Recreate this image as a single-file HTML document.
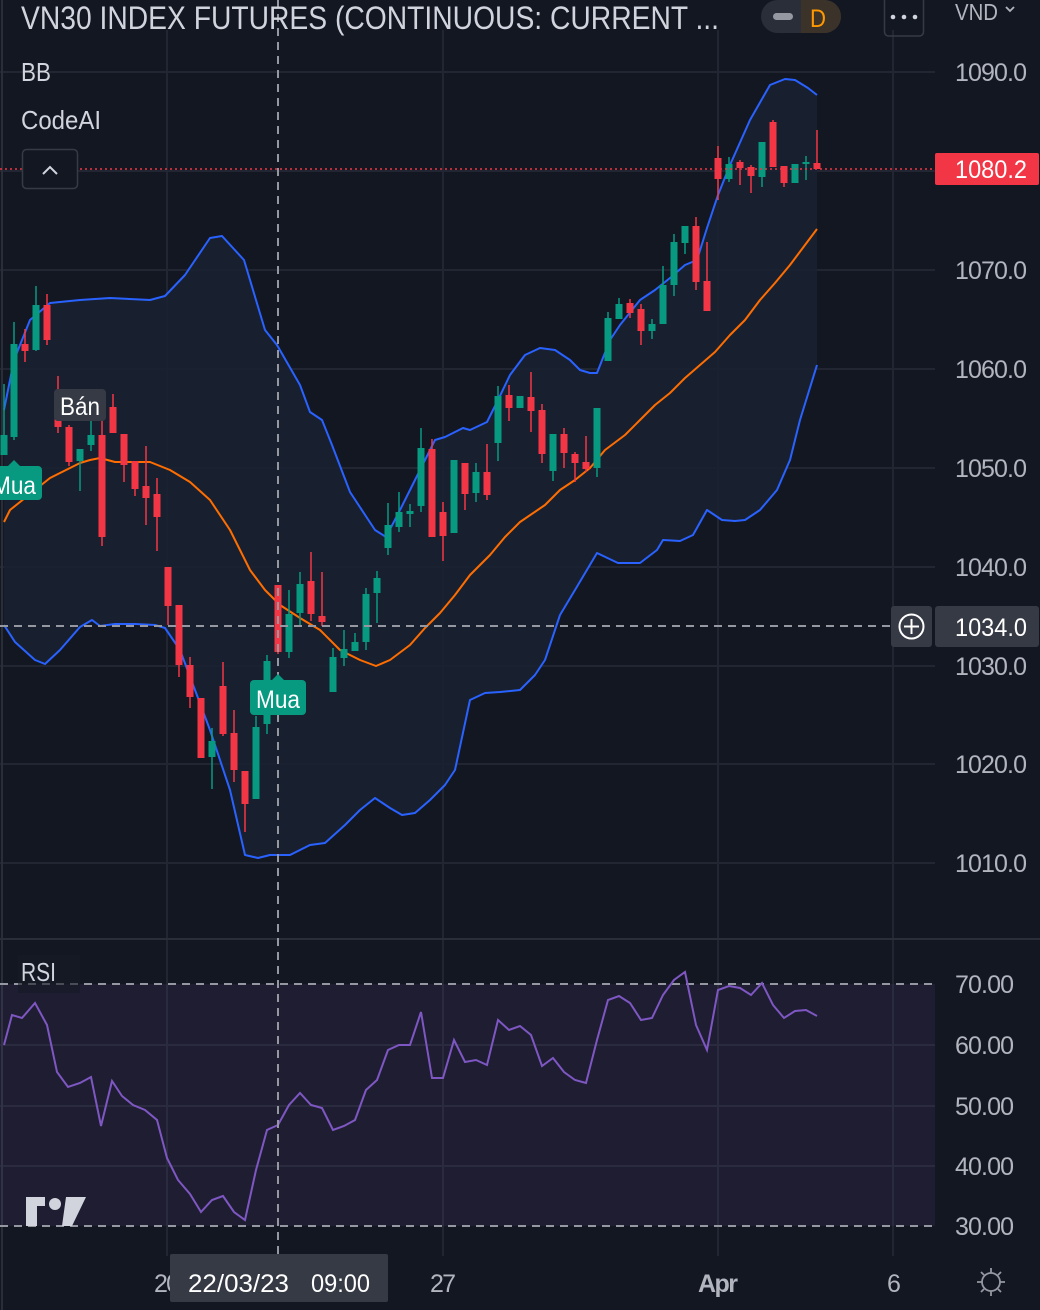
<!DOCTYPE html>
<html><head><meta charset="utf-8"><style>
html,body{margin:0;padding:0;background:#131722;}
svg{display:block;font-family:"Liberation Sans",sans-serif;}
</style></head><body>
<svg width="1040" height="1310" viewBox="0 0 1040 1310" xmlns="http://www.w3.org/2000/svg">
<rect width="1040" height="1310" fill="#131722"/>
<!-- grid -->
<g stroke="#222632" stroke-width="2">
<path d="M0 72H935M0 171H935M0 270H935M0 369H935M0 468H935M0 567H935M0 666H935M0 764H935M0 863H935"/>
<path d="M167 30V938M443 30V938M718 30V938M893 30V938"/>
<path d="M0 1045H935M0 1106H935M0 1166H935"/>
<path d="M167 940V1256M443 940V1256M718 940V1256M893 940V1256"/>
</g>
<path d="M0 939H1040" stroke="#2a2e39" stroke-width="2"/>
<path d="M2 0V1310" stroke="#2a2e39" stroke-width="2"/>
<!-- BB fill -->
<polygon fill="#1a2131" fill-opacity="0.9" points="4,410 14,360 30,320 50,303 80,300 110,298 150,300 165,296 185,275 210,238 222,236 244,260 265,330 277,345 300,385 310,412 322,420 332,445 350,492 375,530 386,537 400,510 410,490 420,470 435,440 445,437 455,432 463,428 470,430 487,422 498,400 510,375 525,355 540,348 555,350 570,360 580,370 590,373 597,373 610,340 620,325 640,300 655,290 670,278 685,265 697,260 707,228 718,195 730,165 750,120 770,85 785,79 795,80 808,88 817,95 817,365 800,420 790,460 777,490 760,510 745,520 735,521 722,520 707,510 693,535 680,541 663,540 657,550 640,563 618,563 597,553 575,590 560,615 545,660 535,675 520,690 500,692 485,693 470,700 455,770 445,785 430,800 415,813 402,815 390,808 375,798 360,810 345,825 325,843 310,845 290,855 270,855 258,858 245,855 230,790 210,730 195,690 180,650 165,628 155,625 135,624 115,624 100,626 92,620 80,627 60,650 45,664 35,660 25,651 15,642 4,625"/>
<g fill="none" stroke-width="2" stroke-linejoin="round">
<polyline stroke="#2962ff" points="4,410 14,360 30,320 50,303 80,300 110,298 150,300 165,296 185,275 210,238 222,236 244,260 265,330 277,345 300,385 310,412 322,420 332,445 350,492 375,530 386,537 400,510 410,490 420,470 435,440 445,437 455,432 463,428 470,430 487,422 498,400 510,375 525,355 540,348 555,350 570,360 580,370 590,373 597,373 610,340 620,325 640,300 655,290 670,278 685,265 697,260 707,228 718,195 730,165 750,120 770,85 785,79 795,80 808,88 817,95"/>
<polyline stroke="#2962ff" points="4,625 15,642 25,651 35,660 45,664 60,650 80,627 92,620 100,626 115,624 135,624 155,625 165,628 180,650 195,690 210,730 230,790 245,855 258,858 270,855 290,855 310,845 325,843 345,825 360,810 375,798 390,808 402,815 415,813 430,800 445,785 455,770 470,700 485,693 500,692 520,690 535,675 545,660 560,615 575,590 597,553 618,563 640,563 657,550 663,540 680,541 693,535 707,510 722,520 735,521 745,520 760,510 777,490 790,460 800,420 817,365"/>
<polyline stroke="#ff6d00" points="4,522 10,510 35,490 50,478 80,463 90,460 100,458 115,462 150,462 170,470 190,482 210,500 230,530 250,570 265,590 280,605 300,618 320,630 340,650 360,660 376,666 390,660 410,645 425,628 440,613 455,595 470,575 490,555 505,537 520,522 545,505 560,490 575,480 590,468 605,450 625,435 640,420 655,405 670,393 685,378 700,365 715,352 730,335 745,320 760,300 775,283 790,265 805,245 817,229"/>
</g>
<!-- red candles -->
<g fill="#f23645">
<path stroke="#f23645" stroke-width="1.5" d="M25 329V362M47 294V345M58 376V433M69 425V466M102 403V546M113 394V433M124 434V482M135 461V496M146 446V525M157 478V551M168 567V625M179 605V677M190 657V708M201 698V758M223 662V736M234 710V782M245 771V832M278 585V654M311 552V621M322 572V626M432 439V537M443 502V561M465 463V510M487 444V500M509 385V421M531 372V432M542 404V463M564 428V468M575 452V482M586 436V472M630 299V318M641 304V345M696 217V290M707 242V311M718 146V200M740 160V185M751 165V193M773 120V167M784 166V187M817 130V169"/>
<rect x="21.5" y="344" width="7" height="7"/><rect x="43.5" y="305" width="7" height="35"/><rect x="54.5" y="394" width="7" height="33"/><rect x="65.5" y="427" width="7" height="35"/><rect x="98.5" y="435" width="7" height="102"/><rect x="109.5" y="407" width="7" height="26"/><rect x="120.5" y="434" width="7" height="31"/><rect x="131.5" y="461" width="7" height="28"/><rect x="142.5" y="486" width="7" height="12"/><rect x="153.5" y="494" width="7" height="23"/><rect x="164.5" y="567" width="7" height="39"/><rect x="175.5" y="605" width="7" height="60"/><rect x="186.5" y="665" width="7" height="32"/><rect x="197.5" y="698" width="7" height="60"/><rect x="219.5" y="686" width="7" height="48"/><rect x="230.5" y="733" width="7" height="37"/><rect x="241.5" y="771" width="7" height="33"/><rect x="274.5" y="585" width="7" height="67"/><rect x="307.5" y="581" width="7" height="33"/><rect x="318.5" y="616" width="7" height="6"/><rect x="428.5" y="449" width="7" height="88"/><rect x="439.5" y="512" width="7" height="24"/><rect x="461.5" y="463" width="7" height="31"/><rect x="483.5" y="472" width="7" height="23"/><rect x="505.5" y="395" width="7" height="13"/><rect x="527.5" y="397" width="7" height="14"/><rect x="538.5" y="410" width="7" height="44"/><rect x="560.5" y="434" width="7" height="19"/><rect x="571.5" y="454" width="7" height="9"/><rect x="582.5" y="462" width="7" height="7"/><rect x="626.5" y="303" width="7" height="10"/><rect x="637.5" y="309" width="7" height="22"/><rect x="692.5" y="226" width="7" height="56"/><rect x="703.5" y="281" width="7" height="30"/><rect x="714.5" y="158" width="7" height="21"/><rect x="736.5" y="162" width="7" height="6"/><rect x="747.5" y="167" width="7" height="9"/><rect x="769.5" y="122" width="7" height="45"/><rect x="780.5" y="166" width="7" height="17"/><rect x="813.5" y="163" width="7" height="6"/>
</g>
<!-- green candles -->
<g fill="#089981">
<path stroke="#089981" stroke-width="1.5" d="M4 384V455M14 322V440M36 286V351M80 449V491M91 396V451M212 728V789M256 716V799M267 655V734M289 590V658M300 572V626M333 648V692M344 630V666M355 633V651M366 588V650M377 571V623M388 503V555M399 492V532M410 504V527M421 428V512M454 460V533M476 463V502M498 386V461M520 396V408M553 434V481M597 408V477M608 312V361M619 298V319M652 319V339M663 266V324M674 234V296M685 226V254M729 157V182M762 142V187M795 164V183M806 156V180"/>
<rect x="0.5" y="435" width="7" height="20"/><rect x="10.5" y="344" width="7" height="93"/><rect x="32.5" y="305" width="7" height="45"/><rect x="76.5" y="449" width="7" height="12"/><rect x="87.5" y="435" width="7" height="10"/><rect x="208.5" y="741" width="7" height="16"/><rect x="252.5" y="727" width="7" height="72"/><rect x="263.5" y="661" width="7" height="63"/><rect x="285.5" y="614" width="7" height="38"/><rect x="296.5" y="584" width="7" height="29"/><rect x="329.5" y="657" width="7" height="35"/><rect x="340.5" y="649" width="7" height="9"/><rect x="351.5" y="642" width="7" height="9"/><rect x="362.5" y="594" width="7" height="48"/><rect x="373.5" y="578" width="7" height="15"/><rect x="384.5" y="525" width="7" height="23"/><rect x="395.5" y="512" width="7" height="15"/><rect x="406.5" y="511" width="7" height="3"/><rect x="417.5" y="448" width="7" height="58"/><rect x="450.5" y="460" width="7" height="73"/><rect x="472.5" y="472" width="7" height="21"/><rect x="494.5" y="396" width="7" height="47"/><rect x="516.5" y="396" width="7" height="12"/><rect x="549.5" y="434" width="7" height="37"/><rect x="593.5" y="408" width="7" height="60"/><rect x="604.5" y="318" width="7" height="43"/><rect x="615.5" y="304" width="7" height="15"/><rect x="648.5" y="324" width="7" height="7"/><rect x="659.5" y="285" width="7" height="39"/><rect x="670.5" y="242" width="7" height="43"/><rect x="681.5" y="226" width="7" height="17"/><rect x="725.5" y="164" width="7" height="15"/><rect x="758.5" y="142" width="7" height="35"/><rect x="791.5" y="164" width="7" height="19"/><rect x="802.5" y="162" width="7" height="2"/>
</g>
<!-- current price line -->
<path d="M0 169H935" stroke="#f23645" stroke-width="1.5" stroke-dasharray="2 3"/>
<!-- RSI pane -->
<rect x="0" y="984" width="935" height="242" fill="#7e57c2" fill-opacity="0.1"/>
<path d="M0 984H935M0 1226H935" stroke="#9598a1" stroke-width="2" stroke-dasharray="8 6"/>
<polyline fill="none" stroke="#7e57c2" stroke-width="2" points="4,1045 12,1015 22,1018 35,1003 47,1025 57,1072 68,1087 80,1083 91,1077 101,1126 112,1081 122,1096 133,1105 145,1110 157,1120 167,1158 178,1180 190,1194 201,1212 212,1200 223,1196 234,1212 245,1220 256,1170 267,1130 278,1125 289,1105 300,1093 311,1105 322,1108 333,1130 344,1126 355,1120 366,1090 377,1080 388,1050 399,1045 410,1045 421,1012 432,1078 443,1078 454,1040 465,1062 476,1060 487,1065 498,1020 509,1030 520,1026 531,1035 542,1066 553,1058 564,1072 575,1080 586,1083 597,1040 608,1000 619,996 630,1003 641,1020 652,1018 663,995 674,980 685,972 696,1025 707,1050 718,990 729,986 740,988 751,995 762,983 773,1005 784,1018 795,1011 806,1010 817,1016"/>
<!-- crosshair -->
<path d="M278 0V1256" stroke="#9598a1" stroke-width="2" stroke-dasharray="8 6"/>
<path d="M0 626H892" stroke="#9598a1" stroke-width="2" stroke-dasharray="8 6"/>
<!-- markers -->
<rect x="54" y="389" width="52" height="32" rx="4" fill="#363a45"/>
<text x="60" y="415" font-size="25" fill="#fff" textLength="40" lengthAdjust="spacingAndGlyphs">Bán</text>
<rect x="-10" y="466" width="52" height="34" rx="4" fill="#089981"/>
<path d="M8 466l6-6 6 6z" fill="#089981"/>
<text x="-8" y="494" font-size="25" fill="#fff" textLength="44" lengthAdjust="spacingAndGlyphs">Mua</text>
<rect x="250" y="680" width="56" height="35" rx="4" fill="#089981"/>
<path d="M272 680l6-6 6 6z" fill="#089981"/>
<text x="256" y="708" font-size="25" fill="#fff" textLength="44" lengthAdjust="spacingAndGlyphs">Mua</text>
<!-- header -->
<text x="21" y="29" font-size="32" fill="#d1d4dc" textLength="698" lengthAdjust="spacingAndGlyphs">VN30 INDEX FUTURES (CONTINUOUS: CURRENT ...</text>
<rect x="761" y="0" width="80" height="33" rx="16.5" fill="#2a2e39"/>
<path d="M801 0H824.5A16.5 16.5 0 0 1 824.5 33H801Z" fill="#3b3329"/>
<rect x="773" y="13" width="20" height="7" rx="3.5" fill="#9598a1"/>
<text x="810" y="27" font-size="25" fill="#ff9800" textLength="16" lengthAdjust="spacingAndGlyphs">D</text>
<rect x="884.5" y="-4" width="39" height="40" rx="4" fill="none" stroke="#363a45" stroke-width="1.5"/>
<circle cx="893" cy="17" r="2.3" fill="#d1d4dc"/><circle cx="904" cy="17" r="2.3" fill="#d1d4dc"/><circle cx="915" cy="17" r="2.3" fill="#d1d4dc"/>
<text x="955" y="20" font-size="23" fill="#b2b5be" textLength="43" lengthAdjust="spacingAndGlyphs">VND</text>
<path d="M1006 7l4 4 4-4" stroke="#b2b5be" stroke-width="1.8" fill="none"/>
<text x="21" y="81" font-size="26" fill="#d1d4dc" textLength="30" lengthAdjust="spacingAndGlyphs">BB</text>
<text x="21" y="129" font-size="26" fill="#d1d4dc" textLength="80" lengthAdjust="spacingAndGlyphs">CodeAI</text>
<rect x="22.5" y="149.5" width="55" height="39" rx="4" fill="#131722" stroke="#363a45" stroke-width="1.5"/>
<path d="M43 174l7-7 7 7" stroke="#d1d4dc" stroke-width="2" fill="none"/>
<rect x="18" y="955" width="62" height="38" fill="#161a25" fill-opacity="0.6"/>
<text x="21" y="981" font-size="26" fill="#d1d4dc" textLength="35" lengthAdjust="spacingAndGlyphs">RSI</text>
<!-- TV logo -->
<path d="M26 1197h19v9h-8v20h-11v-20h0z" fill="#d1d4dc"/>
<circle cx="55" cy="1204" r="6" fill="#d1d4dc"/>
<path d="M66 1197h20l-14 29h-10z" fill="#d1d4dc"/>
<!-- price axis -->
<g font-size="25" fill="#b2b5be" lengthAdjust="spacingAndGlyphs">
<text x="955" y="81" textLength="72">1090.0</text>
<text x="955" y="279" textLength="72">1070.0</text>
<text x="955" y="378" textLength="72">1060.0</text>
<text x="955" y="477" textLength="72">1050.0</text>
<text x="955" y="576" textLength="72">1040.0</text>
<text x="955" y="675" textLength="72">1030.0</text>
<text x="955" y="773" textLength="72">1020.0</text>
<text x="955" y="872" textLength="72">1010.0</text>
<text x="955" y="993" textLength="59">70.00</text>
<text x="955" y="1054" textLength="59">60.00</text>
<text x="955" y="1115" textLength="59">50.00</text>
<text x="955" y="1175" textLength="59">40.00</text>
<text x="955" y="1235" textLength="59">30.00</text>
</g>
<rect x="935" y="153" width="104" height="32" rx="2" fill="#f23645"/>
<text x="955" y="178" font-size="25" fill="#fff" textLength="72" lengthAdjust="spacingAndGlyphs">1080.2</text>
<rect x="891" y="606" width="41" height="41" rx="3" fill="#363a45"/>
<circle cx="911.5" cy="626.5" r="12" fill="none" stroke="#fff" stroke-width="2"/>
<path d="M911.5 619v15M904 626.5h15" stroke="#fff" stroke-width="2"/>
<rect x="935" y="606" width="104" height="41" rx="3" fill="#363a45"/>
<text x="955" y="636" font-size="25" fill="#fff" textLength="72" lengthAdjust="spacingAndGlyphs">1034.0</text>
<!-- time axis -->
<g font-size="25" fill="#b2b5be" lengthAdjust="spacingAndGlyphs">
<text x="154" y="1292" textLength="26">20</text>
<text x="430" y="1292" textLength="26">27</text>
<text x="698" y="1292" font-weight="bold" textLength="40">Apr</text>
<text x="887" y="1292">6</text>
</g>
<rect x="170" y="1254" width="218" height="48" rx="2" fill="#363a45"/>
<text x="188" y="1292" font-size="25" fill="#fff" textLength="101" lengthAdjust="spacingAndGlyphs">22/03/23</text>
<text x="311" y="1292" font-size="25" fill="#fff" textLength="59" lengthAdjust="spacingAndGlyphs">09:00</text>
<circle cx="991" cy="1282" r="9" fill="none" stroke="#9598a1" stroke-width="1.8"/>
<path d="M991 1268v5M991 1291v5M977 1282h5M1000 1282h5M981 1272l3 3M998 1289l3 3M981 1292l3-3M998 1275l3-3" stroke="#9598a1" stroke-width="1.8"/>
</svg>
</body></html>
